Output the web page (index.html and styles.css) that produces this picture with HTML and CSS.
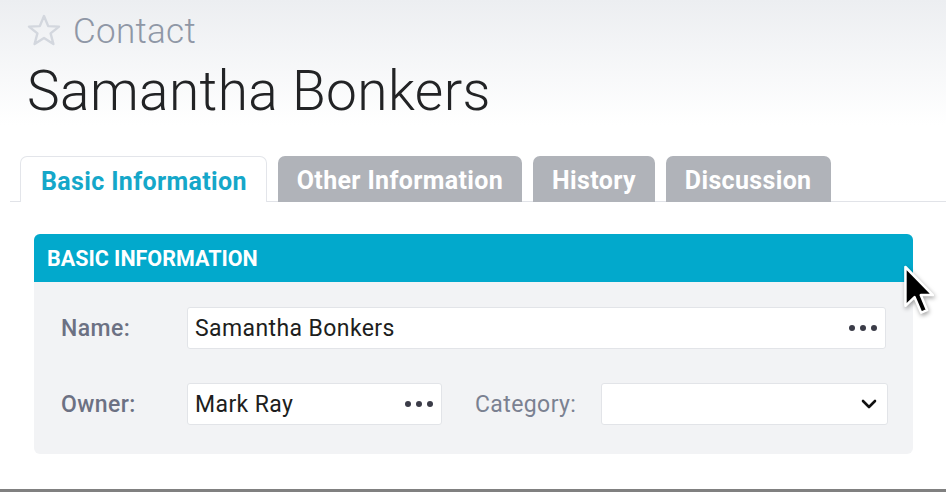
FILE: index.html
```
<!DOCTYPE html>
<html lang="en">
<head>
    <meta charset="UTF-8">
    <meta name="viewport" content="width=device-width, initial-scale=1.0">
    <title>Contact - Samantha Bonkers</title>
    <link rel="stylesheet" href="styles.css">
</head>
<body>
    <div id="page">
        <div id="record-header">
            <div class="record-type">
                <svg class="star" width="34" height="32" viewBox="0 0 34 32">
                    <polygon points="17,2 21.2,12.1 32,12.6 23.6,19.4 26.4,30 17,24 7.6,30 10.4,19.4 2,12.6 12.8,12.1" fill="none" stroke="#d3d7de" stroke-width="2.4" stroke-linejoin="round"/>
                </svg>
                <span>Contact</span>
            </div>
            <h1>Samantha Bonkers</h1>
        </div>

        <div id="tabs">
            <div class="tab active">Basic Information</div>
            <div class="tab">Other Information</div>
            <div class="tab">History</div>
            <div class="tab">Discussion</div>
        </div>

        <div id="panel">
            <div class="panel-title">BASIC INFORMATION</div>
            <div class="panel-body">
                <div class="field-row">
                    <label class="field-label">Name:</label>
                    <div class="field-input name-input">
                        <span>Samantha Bonkers</span>
                        <span class="dots"><i></i><i></i><i></i></span>
                    </div>
                </div>
                <div class="field-row">
                    <label class="field-label">Owner:</label>
                    <div class="field-input owner-input">
                        <span>Mark Ray</span>
                        <span class="dots"><i></i><i></i><i></i></span>
                    </div>
                    <label class="field-label light">Category:</label>
                    <div class="field-input category-input">
                        <span></span>
                        <svg width="16" height="10" viewBox="0 0 16 10">
                            <polyline points="2,2 8,8 14,2" fill="none" stroke="#111" stroke-width="2.6" stroke-linecap="round" stroke-linejoin="round"/>
                        </svg>
                    </div>
                </div>
            </div>
        </div>

        <!-- mouse pointer sitting over the panel edge -->
        <svg class="cursor" width="32" height="54" viewBox="0 0 14 23">
            <path d="M1.5,1 L1.5,18 L5.5,14.2 L8.4,21 L11,19.9 L8.2,13.3 L13.5,13.3 Z" fill="#000" stroke="#fff" stroke-width="1.1" stroke-linejoin="round"/>
        </svg>

        <div id="bottom-line"></div>
    </div>
</body>
</html>
```

FILE: styles.css
```
body {
    margin: 0;
    font-family: Roboto, "Noto Sans", Arial, sans-serif;
    background-color: #ffffff;
}

#page {
    position: relative;
    height: 492px;
    display: flex;
    flex-direction: column;
    overflow: hidden;
}

#record-header {
    padding: 10px 0 0 27px;
    height: 146px;
    box-sizing: border-box;
    background: linear-gradient(#eceef1, #ffffff 125px);
}

.record-type {
    display: flex;
    align-items: center;
    gap: 12px;
    height: 42px;
    color: #8f97a6;
    font-size: 35px;
    font-weight: 300;
    letter-spacing: 0.3px;
}

.star {
    margin-top: -2px;
}

#record-header h1 {
    margin: 6px 0 0 0;
    font-size: 55px;
    font-weight: 300;
    color: #222325;
    line-height: 66px;
    letter-spacing: 0.4px;
}

#tabs {
    display: flex;
    gap: 11px;
    margin: 10px 0 0 10px;
    padding-left: 10px;
    border-bottom: 1px solid #e1e3e8;
    height: 45px;
}

.tab {
    height: 46px;
    box-sizing: border-box;
    padding: 3px 19px 0 19px;
    display: flex;
    align-items: center;
    font-size: 25px;
    font-weight: 700;
    letter-spacing: 0.35px;
    color: #ffffff;
    background-color: #b0b3b9;
    border-radius: 7px 7px 0 0;
}

.tab.active {
    padding-left: 20px;
    color: #15a7c9;
    background-color: #ffffff;
    border: 1px solid #e3e5ea;
    border-bottom: none;
}

#panel {
    margin: 32px 0 0 34px;
    width: 879px;
    border-radius: 6px;
    overflow: hidden;
    background-color: #f2f3f5;
}

.panel-title {
    height: 48px;
    padding-left: 13px;
    display: flex;
    align-items: center;
    background-color: #02a9cc;
    color: #ffffff;
    font-size: 21.5px;
    font-weight: 700;
}

.panel-body {
    padding: 25px 0 29px 27px;
    display: flex;
    flex-direction: column;
    gap: 34px;
}

.field-row {
    display: flex;
    align-items: center;
}

.field-label {
    width: 126px;
    font-size: 23px;
    letter-spacing: 0.4px;
    font-weight: 500;
    color: #6c7183;
}

.field-label.light {
    width: 126px;
    margin-left: 33px;
    font-weight: 400;
    color: #7b8191;
}

.field-input {
    height: 42px;
    box-sizing: border-box;
    display: flex;
    align-items: center;
    justify-content: space-between;
    padding: 0 8px 0 7px;
    background-color: #ffffff;
    border: 1px solid #e2e4e8;
    border-radius: 3px;
    font-size: 23px;
    letter-spacing: 0.4px;
    color: #1d1e20;
}

.name-input {
    width: 699px;
}

.owner-input {
    width: 255px;
}

.category-input {
    width: 287px;
    padding-right: 10px;
}

.dots {
    display: flex;
    gap: 5px;
}

.dots i {
    width: 6px;
    height: 6px;
    border-radius: 50%;
    background-color: #3b3c48;
}

.cursor {
    position: absolute;
    left: 902px;
    top: 264px;
    filter: drop-shadow(1px 2px 2px rgba(0, 0, 0, 0.35));
}

#bottom-line {
    margin-top: auto;
    height: 3px;
    background-color: #808080;
}
```
